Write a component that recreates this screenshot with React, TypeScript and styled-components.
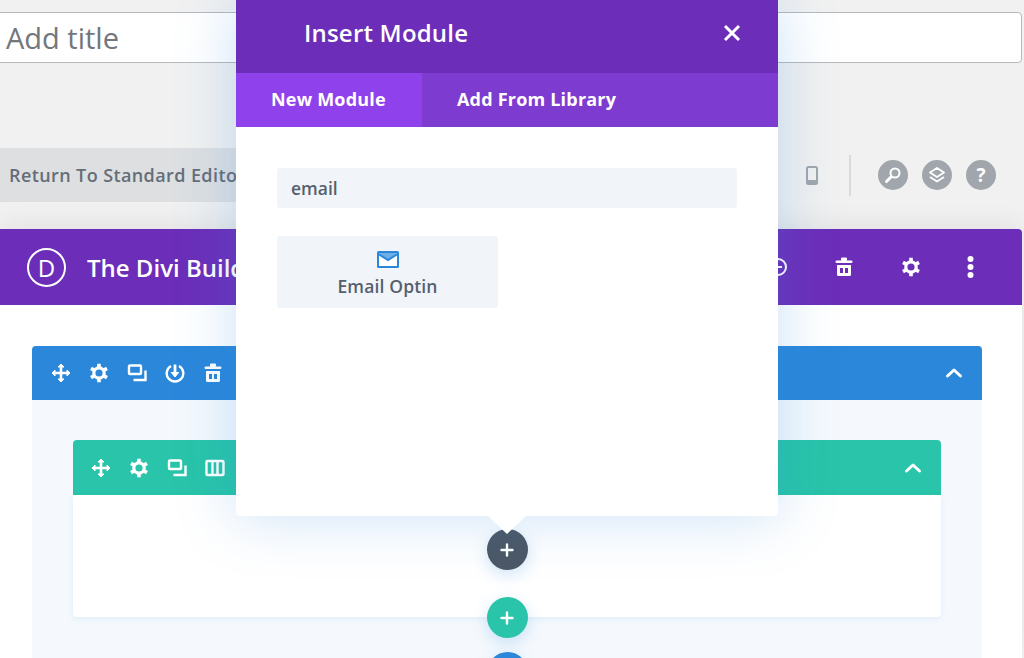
import styled, { createGlobalStyle } from "styled-components";

const GlobalStyle = createGlobalStyle`
  html, body {
    margin: 0;
    padding: 0;
    background: #f1f1f1;
    font-family: "Open Sans", "Liberation Sans", sans-serif;
  }
  * {
    box-sizing: border-box;
  }
`;

const Page = styled.div`
  position: relative;
  width: 1024px;
  height: 658px;
  overflow: hidden;
  padding-top: 12px;
  background: #f1f1f1;
`;

const TitleInput = styled.div`
  width: 1026px;
  height: 51px;
  margin-left: -4px;
  padding-left: 9px;
  display: flex;
  align-items: center;
  background: #fff;
  border: 1px solid #b4b9be;
  border-radius: 4px;
  color: #72777c;
  font-size: 29px;
`;

const Toolbar = styled.div`
  height: 54px;
  margin-top: 85px;
  display: flex;
  align-items: center;
`;

const ReturnButton = styled.div`
  width: 300px;
  height: 54px;
  padding-left: 9px;
  display: flex;
  align-items: center;
  background: #dddfe1;
  color: #656e78;
  font-size: 18px;
  font-weight: 600;
  letter-spacing: 0.4px;
  white-space: nowrap;
`;

const ToolbarRight = styled.div`
  margin-left: auto;
  display: flex;
  align-items: center;
  padding-right: 28px;
`;

const PhoneIcon = styled.svg`
  width: 12px;
  height: 19px;
  margin-right: 31px;
`;

const Divider = styled.div`
  width: 2px;
  height: 41px;
  margin-right: 27px;
  background: #dadada;
`;

const RoundButton = styled.div`
  width: 30px;
  height: 30px;
  border-radius: 50%;
  background: #a0a6ac;
  display: flex;
  align-items: center;
  justify-content: center;
  color: #fff;
  font-size: 19px;
  font-weight: 700;
`;

const RoundGroup = styled.div`
  display: flex;
  gap: 14px;
`;

const Builder = styled.div`
  width: 1022px;
  margin-top: 27px;
  box-shadow: 0 -6px 24px rgba(0, 0, 0, 0.06);
`;

const BuilderBar = styled.div`
  height: 76px;
  padding: 0 47px 0 27px;
  display: flex;
  align-items: center;
  background: #6c2eb9;
  border-radius: 0 4px 0 0;
  color: #fff;
`;

const Logo = styled.div`
  width: 39px;
  height: 39px;
  margin-right: 21px;
  border: 2px solid #fff;
  border-radius: 50%;
  display: flex;
  align-items: center;
  justify-content: center;
  font-size: 24px;
`;

const BuilderTitle = styled.div`
  font-size: 24px;
  font-weight: 600;
  white-space: nowrap;
`;

const BarIcons = styled.div`
  margin-left: auto;
  display: flex;
  align-items: center;
  gap: 46.5px;
`;

const BuilderBody = styled.div`
  height: 353px;
  padding: 41px 40px 0 32px;
  background: #fff;
`;

const Section = styled.div`
  height: 320px;
  background: #f5f9fd;
  border-radius: 4px 4px 0 0;
  padding: 0 41px;
`;

const SectionBar = styled.div`
  height: 54px;
  margin: 0 -41px;
  padding: 0 18px 0 19px;
  display: flex;
  align-items: center;
  gap: 18px;
  border-radius: 4px 4px 0 0;
  background: #2b87da;
`;

const RowBar = styled.div`
  height: 55px;
  padding: 0 18px;
  display: flex;
  align-items: center;
  gap: 18px;
  border-radius: 4px 4px 0 0;
  background: #29c4a9;
`;

const Row = styled.div`
  margin-top: 40px;
`;

const RowBody = styled.div`
  height: 122px;
  padding-top: 34px;
  display: flex;
  flex-direction: column;
  align-items: center;
  background: #fff;
  border-radius: 0 0 4px 4px;
  box-shadow: 0 2px 6px rgba(43, 135, 218, 0.1);
`;

const AddButton = styled.div<{ $color: string }>`
  flex: none;
  width: 41px;
  height: 41px;
  margin-bottom: 27px;
  border-radius: 50%;
  background: ${(props) => props.$color};
  display: flex;
  align-items: center;
  justify-content: center;
  box-shadow: 0 5px 16px rgba(43, 135, 218, 0.22);
  position: relative;
`;

const BlueAddButton = styled(AddButton)`
  margin-top: -13px;
`;

const ChevronWrap = styled.div`
  margin-left: auto;
  display: flex;
`;

const Modal = styled.div`
  position: absolute;
  top: 0;
  left: 236px;
  width: 542px;
  height: 516px;
  background: #fff;
  border-radius: 0 0 4px 4px;
  box-shadow: 0 0 60px rgba(43, 135, 218, 0.25);
  z-index: 5;

  &::after {
    content: "";
    position: absolute;
    left: 252px;
    bottom: -18px;
    border-left: 19px solid transparent;
    border-right: 19px solid transparent;
    border-top: 18px solid #fff;
  }
`;

const ModalHeader = styled.div`
  height: 73px;
  padding: 0 37px 7px 68px;
  display: flex;
  align-items: center;
  justify-content: space-between;
  background: #6c2eb9;
  color: #fff;
`;

const ModalTitle = styled.div`
  margin-bottom: 2px;
  font-size: 24px;
  font-weight: 600;
  letter-spacing: 0.2px;
`;

const Tabs = styled.div`
  height: 54px;
  display: flex;
  background: #7e3bd0;
`;

const Tab = styled.div<{ $active?: boolean }>`
  width: ${(props) => (props.$active ? "186px" : "auto")};
  padding: 0 35px 2px;
  display: flex;
  align-items: center;
  background: ${(props) => (props.$active ? "#8f42ec" : "transparent")};
  color: #fff;
  font-size: 18px;
  font-weight: 700;
  letter-spacing: 0.2px;
  white-space: nowrap;
`;

const ModalBody = styled.div`
  padding: 41px 41px 0;
`;

const SearchBox = styled.div`
  height: 40px;
  padding-left: 14px;
  display: flex;
  align-items: center;
  background: #f1f5f9;
  border-radius: 3px;
  color: #55606e;
  font-size: 17.5px;
  font-weight: 600;
`;

const ModuleCard = styled.div`
  width: 221px;
  height: 72px;
  margin-top: 28px;
  padding-top: 15px;
  display: flex;
  flex-direction: column;
  align-items: center;
  background: #f1f5f9;
  border-radius: 3px;
  color: #55606e;
  font-size: 17.5px;
  font-weight: 600;
  letter-spacing: 0.15px;
`;

const CardLabel = styled.div`
  margin-top: 6px;
`;

const Move = () => (
  <svg width="20" height="20" viewBox="0 0 20 20" fill="none" stroke="#fff" strokeWidth="2.600">
    <path d="M10 3v14M3 10h14" />
    <path d="M7 4l3-3 3 3zM7 16l3 3 3-3zM4 7l-3 3 3 3zM16 7l3 3-3 3z" fill="#fff" strokeWidth="1" strokeLinejoin="round" />
  </svg>
);

const Gear = () => (
  <svg width="20" height="20" viewBox="0 0 20 20" fill="none" stroke="#fff">
    <circle cx="10" cy="10" r="5.200" strokeWidth="3.200" />
    <path
      strokeWidth="3.600"
      d="M10 .8v3.400M10 15.800v3.400M2 5.400l3 1.700M15 12.900l3 1.700M2 14.600l3-1.700M15 7.100l3-1.700"
    />
  </svg>
);

const Duplicate = () => (
  <svg width="20" height="20" viewBox="0 0 20 20" fill="none" stroke="#fff" strokeWidth="2.400">
    <rect x="2" y="2.500" width="12" height="8.500" rx="1" />
    <path d="M18.500 7.500V17H6.500" />
  </svg>
);

const SaveIcon = () => (
  <svg width="20" height="20" viewBox="0 0 20 20" fill="none" stroke="#fff" strokeWidth="2.400">
    <path d="M6 3a8.300 8.300 0 1 0 8 0" />
    <path d="M10 1.500v9" strokeWidth="2.800" />
    <path d="M6.300 9.500 10 14l3.700-4.500z" fill="#fff" strokeWidth="1" strokeLinejoin="round" />
  </svg>
);

const Trash = () => (
  <svg width="20" height="20" viewBox="0 0 20 20" fill="#fff">
    <rect x="7" y="0.500" width="6" height="3.500" rx="1" />
    <rect x="1.500" y="3.500" width="17" height="2.600" rx="1.300" />
    <path d="M3 8h14v9.500a1.500 1.500 0 0 1-1.500 1.500h-11A1.500 1.500 0 0 1 3 17.500zm3 3v5h3v-5zm5 0v5h3v-5z" fillRule="evenodd" />
  </svg>
);

const Columns = () => (
  <svg width="20" height="20" viewBox="0 0 20 20" fill="none" stroke="#fff" strokeWidth="2.400">
    <rect x="1.500" y="3" width="17" height="14" rx="1" />
    <path d="M7.500 3v14M12.500 3v14" />
  </svg>
);

const Chevron = () => (
  <svg width="20" height="20" viewBox="0 0 20 20" fill="none" stroke="#fff" strokeWidth="3" strokeLinecap="round" strokeLinejoin="round">
    <path d="M3.500 13 10 7l6.500 6" />
  </svg>
);

const PlusCircle = () => (
  <svg width="20" height="20" viewBox="0 0 20 20" fill="none" stroke="#fff" strokeWidth="2">
    <circle cx="10" cy="10" r="8" />
    <path d="M6 10h8" />
  </svg>
);

const Dots = () => (
  <svg width="8" height="22" viewBox="0 0 8 22" fill="#fff">
    <circle cx="3.500" cy="3" r="3" />
    <circle cx="3.500" cy="11" r="3" />
    <circle cx="3.500" cy="19" r="3" />
  </svg>
);

const Plus = () => (
  <svg width="14" height="14" viewBox="0 0 14 14" stroke="#fff" strokeWidth="2.400" strokeLinecap="round">
    <path d="M7 1.500v11M1.500 7h11" />
  </svg>
);

const Close = () => (
  <svg width="18" height="18" viewBox="0 0 18 18" stroke="#fff" strokeWidth="3">
    <path d="M2 2l14 14M16 2 2 16" />
  </svg>
);

const Search = () => (
  <svg width="20" height="20" viewBox="0 0 20 20" fill="none" stroke="#fff" strokeWidth="2" strokeLinecap="round">
    <circle cx="12" cy="8" r="4.500" />
    <path d="M8 12l-4.500 4.500" strokeWidth="3" />
  </svg>
);

const Layers = () => (
  <svg width="20" height="20" viewBox="0 0 20 20" fill="none" stroke="#fff" strokeWidth="1.800" strokeLinejoin="round">
    <path d="M10 3l7 4.500-7 4.500-7-4.500z" />
    <path d="M3 12l7 4.500 7-4.500" />
  </svg>
);

const Envelope = () => (
  <svg width="22" height="17" viewBox="0 0 22 17">
    <rect width="22" height="17" rx="1.500" fill="#2b87da" />
    <rect x="2" y="2" width="18" height="13" fill="#fff" />
    <path d="M2 2h18v1.500l-9 5.500-9-5.500z" fill="#6eaee8" />
    <path d="M2 3.500l9 5.500 9-5.500" stroke="#2b87da" strokeWidth="2" fill="none" />
  </svg>
);

export default function App() {
  return (
    <Page>
      <GlobalStyle />
      <TitleInput>Add title</TitleInput>
      <Toolbar>
        <ReturnButton>Return To Standard Editor</ReturnButton>
        <ToolbarRight>
          <PhoneIcon viewBox="0 0 12 19">
            <rect x="1" y="1" width="10" height="17" rx="1.500" fill="none" stroke="#a0a6ac" strokeWidth="2" />
            <rect x="1" y="14" width="10" height="4" rx="1" fill="#a0a6ac" />
          </PhoneIcon>
          <Divider />
          <RoundGroup>
            <RoundButton>
              <Search />
            </RoundButton>
            <RoundButton>
              <Layers />
            </RoundButton>
            <RoundButton>?</RoundButton>
          </RoundGroup>
        </ToolbarRight>
      </Toolbar>
      <Builder>
        <BuilderBar>
          <Logo>D</Logo>
          <BuilderTitle>The Divi Builder</BuilderTitle>
          <BarIcons>
            <PlusCircle />
            <Trash />
            <Gear />
            <Dots />
          </BarIcons>
        </BuilderBar>
        <BuilderBody>
          <Section>
            <SectionBar>
              <Move />
              <Gear />
              <Duplicate />
              <SaveIcon />
              <Trash />
              <ChevronWrap>
                <Chevron />
              </ChevronWrap>
            </SectionBar>
            <Row>
              <RowBar>
                <Move />
                <Gear />
                <Duplicate />
                <Columns />
                <ChevronWrap>
                  <Chevron />
                </ChevronWrap>
              </RowBar>
              <RowBody>
                <AddButton $color="#4c5866">
                  <Plus />
                </AddButton>
                <AddButton $color="#29c4a9">
                  <Plus />
                </AddButton>
                <BlueAddButton $color="#2b87da">
                  <Plus />
                </BlueAddButton>
              </RowBody>
            </Row>
          </Section>
        </BuilderBody>
      </Builder>
      <Modal>
        <ModalHeader>
          <ModalTitle>Insert Module</ModalTitle>
          <Close />
        </ModalHeader>
        <Tabs>
          <Tab $active>New Module</Tab>
          <Tab>Add From Library</Tab>
        </Tabs>
        <ModalBody>
          <SearchBox>email</SearchBox>
          <ModuleCard>
            <Envelope />
            <CardLabel>Email Optin</CardLabel>
          </ModuleCard>
        </ModalBody>
      </Modal>
    </Page>
  );
}
